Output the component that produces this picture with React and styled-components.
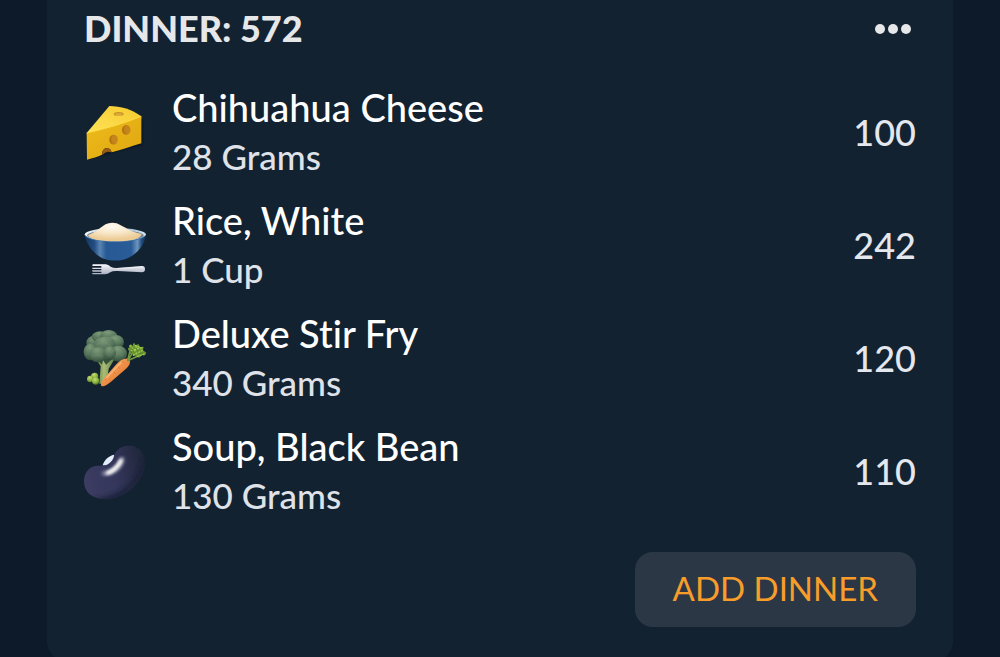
import React from 'react';
import styled, { createGlobalStyle } from 'styled-components';

const GlobalStyle = createGlobalStyle`
  * { box-sizing: border-box; }
  body {
    margin: 0;
    background: #0d1a29;
    font-family: Lato, "Noto Sans", sans-serif;
    font-weight: 500;
    font-variant-ligatures: none;
  }
`;

const Page = styled.main`
  height: 100vh;
  overflow: hidden;
  padding: 0 47px;
`;

const Card = styled.section`
  background: #132231;
  border-radius: 0 0 20px 20px;
  padding: 0 37px 34px;
`;

const Header = styled.header`
  display: flex;
  align-items: center;
  justify-content: space-between;
  height: 56px;
`;

const Title = styled.h2`
  margin: 0;
  color: #e6e7e9;
  font-size: 36px;
  line-height: 50px;
  font-weight: 900;
`;

const MenuButton = styled.button`
  display: flex;
  gap: 3px;
  padding: 18px 5px 16px;
  border: 0;
  background: none;
  cursor: pointer;
`;

const Dot = styled.span`
  width: 10px;
  height: 10px;
  border-radius: 50%;
  background: #e6e7e9;
`;

const FoodList = styled.ul`
  display: flex;
  flex-direction: column;
  gap: 15px;
  margin: 27px 0 32px;
  padding: 0;
  list-style: none;
`;

const FoodRow = styled.li`
  display: flex;
  align-items: center;
  gap: 24px;
`;

const FoodIcon = styled.svg`
  flex: none;
  width: 64px;
  height: 64px;
  overflow: visible;
`;

const FoodText = styled.div`
  flex: 1;
  min-width: 0;
`;

const FoodName = styled.div`
  color: #ffffff;
  font-size: 38px;
  line-height: 48px;
`;

const Serving = styled.div`
  color: #dfe2e8;
  font-size: 35px;
  line-height: 50px;
`;

const Calories = styled.div`
  color: #e4e7ee;
  font-size: 36px;
  line-height: 48px;
`;

const Footer = styled.footer`
  display: flex;
  justify-content: flex-end;
`;

const AddButton = styled.button`
  padding: 11px 38px 14px;
  border: 0;
  border-radius: 18px;
  background: #2c3745;
  color: #f89d2a;
  font-family: inherit;
  font-size: 33px;
  line-height: 50px;
  cursor: pointer;
`;

function CheeseIcon() {
  return (
    <FoodIcon viewBox="42 30 192 192" aria-hidden="true">
      <defs>
        <linearGradient id="cheeseTop" x1="0" y1="1" x2="1" y2="0">
          <stop offset="0" stopColor="#ffe45a" />
          <stop offset="1" stopColor="#f6c92d" />
        </linearGradient>
        <linearGradient id="cheeseSide" x1="0" y1="0" x2="1" y2="1">
          <stop offset="0" stopColor="#eebb1c" />
          <stop offset="1" stopColor="#dea70f" />
        </linearGradient>
        <linearGradient id="cheeseHole" x1="0" y1="0" x2="1" y2="0">
          <stop offset="0" stopColor="#ad6c10" />
          <stop offset="1" stopColor="#d4941c" />
        </linearGradient>
        <filter id="cheeseShadow" x="-20%" y="-20%" width="140%" height="140%">
          <feGaussianBlur stdDeviation="3" />
        </filter>
      </defs>
      <path d="M54 206 L218 162 L218 92 L160 150Z" fill="#07101b" opacity=".7" filter="url(#cheeseShadow)" />
      <path d="M50 129 L118 48 C152 48 186 58 214 79 L213 90 L51 133Z" fill="url(#cheeseTop)" />
      <path d="M50 130 C105 118 160 101 214 80 V160 C184 169 155 180 125 187 C122 176 116 174 108 175 C99 177 97 184 96 194 C83 200 68 204 51 209Z" fill="url(#cheeseSide)" />
      <path d="M50 129 C105 117 160 100 214 79" fill="none" stroke="#ffdc3d" strokeWidth="2" />
      <ellipse cx="146" cy="72" rx="15" ry="6" fill="#c8912a" />
      <ellipse cx="146" cy="74" rx="11" ry="4" fill="#dcae35" />
      <ellipse cx="169" cy="120" rx="13" ry="15" fill="url(#cheeseHole)" />
      <ellipse cx="171" cy="118" rx="9" ry="11" fill="#c6851c" />
      <ellipse cx="131" cy="149" rx="13" ry="15" fill="url(#cheeseHole)" />
      <ellipse cx="133" cy="147" rx="9" ry="11" fill="#c6851c" />
      <path d="M96 194 C97 182 101 176 110 175 C118 174 123 178 125 187 C114 183 106 186 100 193Z" fill="#985b12" />
    </FoodIcon>
  );
}

function RiceIcon() {
  return (
    <FoodIcon viewBox="42 9 192 192" aria-hidden="true">
      <defs>
        <linearGradient id="bowlBody" x1="0" y1="0" x2="1" y2="0">
          <stop offset="0" stopColor="#14365f" />
          <stop offset=".16" stopColor="#234f85" />
          <stop offset=".25" stopColor="#5a84b2" />
          <stop offset=".35" stopColor="#275a95" />
          <stop offset=".76" stopColor="#2a5c98" />
          <stop offset=".86" stopColor="#6c94bd" />
          <stop offset=".93" stopColor="#204a7c" />
          <stop offset="1" stopColor="#112e53" />
        </linearGradient>
        <linearGradient id="bowlRim" x1="0" y1="0" x2="1" y2="0">
          <stop offset="0" stopColor="#ffffff" />
          <stop offset=".5" stopColor="#86a8cb" />
          <stop offset="1" stopColor="#d9e4ee" />
        </linearGradient>
        <radialGradient id="riceMound" cx=".45" cy=".2" r=".7">
          <stop offset="0" stopColor="#fffaf1" />
          <stop offset=".5" stopColor="#f8e8cb" />
          <stop offset="1" stopColor="#eccb94" />
        </radialGradient>
        <linearGradient id="forkMetal" x1="0" y1="0" x2="0" y2="1">
          <stop offset="0" stopColor="#f9faff" />
          <stop offset="1" stopColor="#a9adbe" />
        </linearGradient>
      </defs>
      <ellipse cx="136" cy="74" rx="92" ry="20" fill="url(#bowlRim)" />
      <ellipse cx="136" cy="76" rx="85" ry="15" fill="#6b7f90" />
      <path d="M44 76 C50 106 75 138 104 147 C123 153 149 153 167 147 C202 134 223 105 228 76 C204 101 68 102 44 76Z" fill="url(#bowlBody)" />
      <path d="M44 75 C61 101 210 101 228 75" fill="none" stroke="#477bad" strokeWidth="3" />
      <path d="M54 75 C72 69 86 57 100 47 C117 36 137 36 152 46 C172 55 179 65 215 72 C214 84 191 94 137 94 C85 94 55 86 54 75Z" fill="url(#riceMound)" />
      <path d="M68 163 H107 Q115 164 122 170 Q128 174 140 174 L216 168 Q225 168 225 178 Q225 187 216 187 L143 183 Q128 182 121 187 Q113 193 104 193 H68 L66 189 H94 L94 185 H68 L66 181 H94 L94 177 H68 L66 173 H94 L94 168 H67Z" fill="url(#forkMetal)" />
      <path d="M140 176 L219 170" stroke="#ffffff" strokeWidth="2" opacity=".8" />
    </FoodIcon>
  );
}

function VegetablesIcon() {
  return (
    <FoodIcon viewBox="42 18 192 192" aria-hidden="true">
      <defs>
        <linearGradient id="stem" x1="0" y1="0" x2="1" y2="0">
          <stop offset="0" stopColor="#57763e" />
          <stop offset=".45" stopColor="#a9bd75" />
          <stop offset="1" stopColor="#638047" />
        </linearGradient>
        <radialGradient id="floret" cx=".45" cy=".2" r=".8">
          <stop offset="0" stopColor="#7d9a79" />
          <stop offset=".6" stopColor="#55745a" />
          <stop offset="1" stopColor="#304b38" />
        </radialGradient>
        <linearGradient id="carrot" x1="0" y1="0" x2="1" y2="1">
          <stop offset="0" stopColor="#ffba77" />
          <stop offset=".55" stopColor="#ed8b43" />
          <stop offset="1" stopColor="#cd5b20" />
        </linearGradient>
        <radialGradient id="pea" cx=".4" cy=".3" r=".7">
          <stop offset="0" stopColor="#c5da71" />
          <stop offset=".6" stopColor="#8db442" />
          <stop offset="1" stopColor="#4d741f" />
        </radialGradient>
      </defs>
      <path d="M76 113 L92 139 L88 191 H110 L116 146 L134 116Z" fill="url(#stem)" />
      <path d="M78 117 L96 134 L99 120 L108 134 L128 116Z" fill="#35503a" />
      <g fill="url(#floret)">
        <ellipse cx="73" cy="68" rx="24" ry="21" />
        <ellipse cx="90" cy="50" rx="25" ry="16" />
        <ellipse cx="116" cy="49" rx="26" ry="19" />
        <ellipse cx="138" cy="66" rx="24" ry="21" />
        <ellipse cx="103" cy="76" rx="34" ry="26" />
        <ellipse cx="61" cy="96" rx="20" ry="25" />
        <ellipse cx="84" cy="104" rx="27" ry="23" />
        <ellipse cx="145" cy="101" rx="26" ry="24" />
        <ellipse cx="119" cy="99" rx="19" ry="20" />
      </g>
      <g fill="none" stroke="#8da383" strokeWidth="3" strokeLinecap="round" strokeDasharray="1 6" opacity=".55">
        <path d="M61 62 Q78 50 88 62 M91 43 Q115 28 136 45 M119 60 Q139 49 151 66" />
        <path d="M52 88 Q69 79 80 97 M81 74 Q99 60 121 77 M126 96 Q145 77 159 101" />
        <path d="M67 111 Q81 99 97 111 M132 109 Q151 92 158 111 M97 53 H126" />
      </g>
      <g fill="url(#pea)">
        <circle cx="74" cy="169" r="11" />
        <circle cx="61" cy="177" r="10" />
        <circle cx="77" cy="183" r="11" />
      </g>
      <path d="M176 116 C163 113 150 120 139 133 L103 174 C94 185 91 194 94 198 C101 201 112 194 123 185 L163 151 C178 138 185 127 176 116Z" fill="url(#carrot)" />
      <path d="M157 125 L163 130 M143 139 L150 146 M130 154 L136 161 M119 177 L124 182 M105 178 L110 182" stroke="#d66d2d" strokeWidth="2" />
      <path d="M154 127 L109 174" stroke="#ffd39c" strokeWidth="4" opacity=".55" />
      <g fill="none" stroke="#71983c" strokeWidth="5" strokeLinecap="round">
        <path d="M173 121 L184 77 M174 121 L201 76 M176 121 L220 101 M184 102 L176 86 M190 98 L192 72 M198 109 L214 89 M194 97 L218 82" />
      </g>
      <path d="M177 78 L181 73 L187 78 L192 70 L197 77 L206 72 L209 81 L220 81 L219 91 L229 98 L225 106 L215 105 L207 114 L200 106 L189 109 L187 96 L179 94Z" fill="#6c9731" />
      <g fill="none" stroke="#a2c953" strokeWidth="4" strokeLinecap="round" strokeDasharray="3 6">
        <path d="M180 77 L196 94 L199 78 M185 92 L212 83 M190 105 L218 91 M202 109 L226 102 M196 76 L216 85" />
      </g>
      <path d="M185 84 L192 98 M198 84 L204 96 M207 101 L218 98" stroke="#4c7a2a" strokeWidth="2" />
    </FoodIcon>
  );
}

function BeanIcon() {
  return (
    <FoodIcon viewBox="42 27 192 192" aria-hidden="true">
      <defs>
        <linearGradient id="beanSkin" x1="0" y1=".6" x2="1" y2=".4">
          <stop offset="0" stopColor="#3d3c62" />
          <stop offset=".5" stopColor="#33365a" />
          <stop offset=".8" stopColor="#282c46" />
          <stop offset="1" stopColor="#1b2639" />
        </linearGradient>
        <filter id="beanGlow" x="-30%" y="-30%" width="160%" height="160%">
          <feGaussianBlur stdDeviation="4" />
        </filter>
        <filter id="beanShade" x="-20%" y="-20%" width="140%" height="140%">
          <feGaussianBlur stdDeviation="7" />
        </filter>
        <clipPath id="beanShape">
          <path d="M42 153 C42 127 59 107 84 107 C111 109 121 96 132 75 C142 55 159 46 181 47 C208 49 226 70 225 98 C224 150 171 203 107 208 C65 207 42 186 42 153Z" />
        </clipPath>
      </defs>
      <g clipPath="url(#beanShape)">
        <rect x="40" y="44" width="190" height="168" fill="url(#beanSkin)" />
        <path d="M72 214 C145 213 207 165 226 90" fill="none" stroke="#1c243b" strokeWidth="18" filter="url(#beanShade)" />
        <path d="M156 88 C156 108 129 130 103 130" fill="none" stroke="#777995" strokeWidth="16" strokeLinecap="round" filter="url(#beanGlow)" />
        <path d="M153 91 Q139 121 112 129" fill="none" stroke="#ffffff" strokeWidth="10" strokeLinecap="round" filter="url(#beanGlow)" />
        <path d="M151 95 Q139 116 117 127" fill="none" stroke="#f2f0eb" strokeWidth="7" strokeLinecap="round" filter="url(#beanGlow)" />
      </g>
      <path d="M98 106 C102 91 116 77 132 74 C133 85 121 100 109 105Z" fill="#e4edfc" />
    </FoodIcon>
  );
}

const foods = [
  { name: 'Chihuahua Cheese', serving: '28 Grams', calories: 100, Icon: CheeseIcon },
  { name: 'Rice, White', serving: '1 Cup', calories: 242, Icon: RiceIcon },
  { name: 'Deluxe Stir Fry', serving: '340 Grams', calories: 120, Icon: VegetablesIcon },
  { name: 'Soup, Black Bean', serving: '130 Grams', calories: 110, Icon: BeanIcon },
];

export default function App() {
  return (
    <>
      <GlobalStyle />
      <Page>
        <Card>
          <Header>
            <Title>DINNER: 572</Title>
            <MenuButton type="button" aria-label="Dinner options">
              <Dot />
              <Dot />
              <Dot />
            </MenuButton>
          </Header>
          <FoodList>
            {foods.map(({ name, serving, calories, Icon }) => (
              <FoodRow key={name}>
                <Icon />
                <FoodText>
                  <FoodName>{name}</FoodName>
                  <Serving>{serving}</Serving>
                </FoodText>
                <Calories>{calories}</Calories>
              </FoodRow>
            ))}
          </FoodList>
          <Footer>
            <AddButton type="button">ADD DINNER</AddButton>
          </Footer>
        </Card>
      </Page>
    </>
  );
}
